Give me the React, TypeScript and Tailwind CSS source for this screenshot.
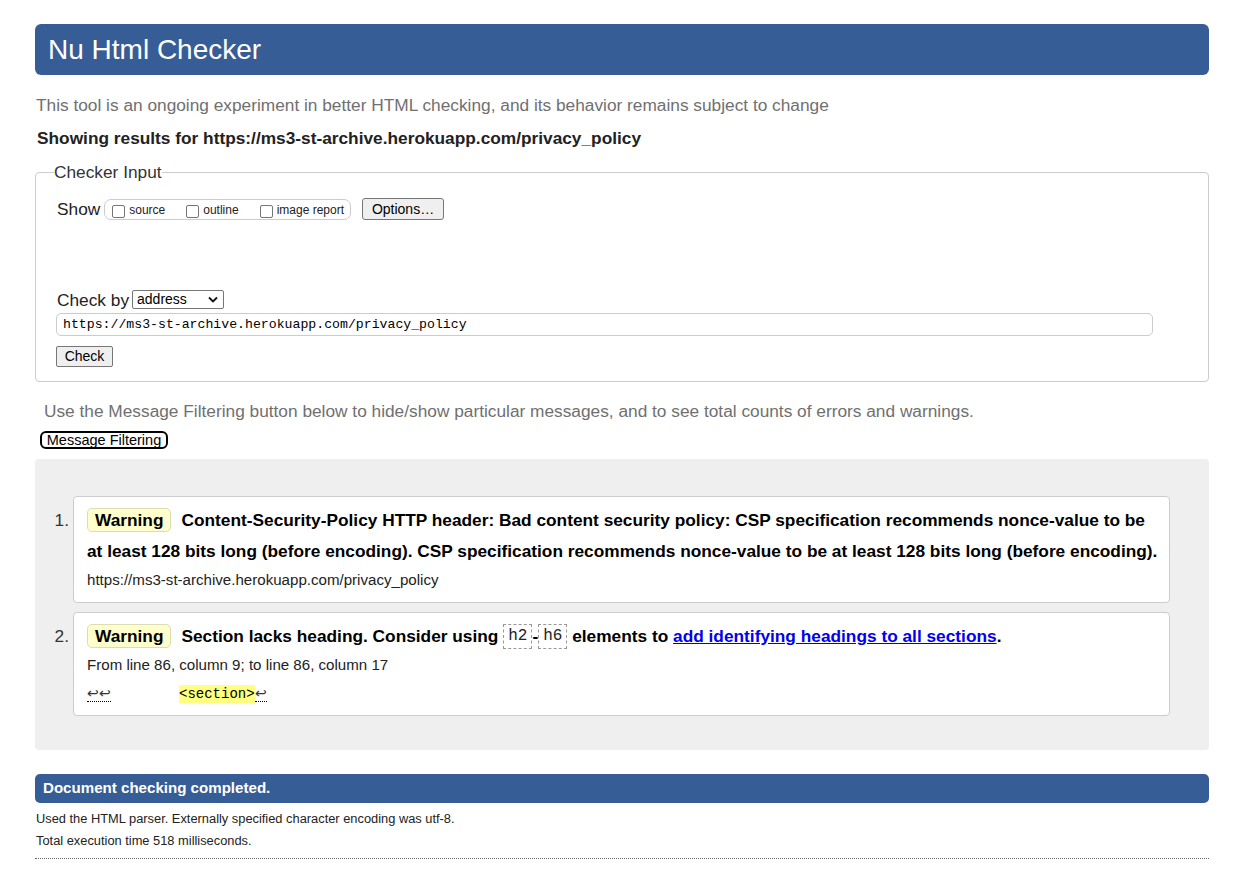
import React from "react";

const Checkbox = () => (
  <span className="inline-block w-[13px] h-[13px] border border-[#767676] rounded-[2px] bg-white shrink-0" />
);

const WarningBadge = () => (
  <span className="inline-block h-[24px] leading-[22px] px-[7px] mr-[10px] bg-[#ffffcc] border border-[#dcdcb4] rounded-[5px] align-middle">
    Warning
  </span>
);

const Code = ({ children }: { children: React.ReactNode }) => (
  <code className="inline-block h-[25px] leading-[23px] px-[4px] border border-dashed border-[#999] font-['Liberation_Mono',monospace] font-normal text-[16px] text-[#222] align-middle">
    {children}
  </code>
);

export default function App() {
  return (
    <div className="font-['Liberation_Sans',Arial,sans-serif] text-[#222] bg-white min-h-[871px] pl-[35px] pr-[24px] pt-[24px] pb-[14px]">
      {/* Title */}
      <h1 className="h-[51px] bg-[#365d95] rounded-[6px] text-white text-[28px] pl-[13px] flex items-center">
        Nu Html Checker
      </h1>

      <p className="mt-[20px] pl-[1px] text-[17.3px] leading-[20px] text-[#707070]">
        This tool is an ongoing experiment in better HTML checking, and its behavior remains subject to change
      </p>

      <p className="mt-[13px] pl-[2px] text-[17.3px] leading-[20px] font-bold">
        Showing results for https://ms3-st-archive.herokuapp.com/privacy_policy
      </p>

      {/* Checker input */}
      <fieldset className="mt-[14px] border border-[#cccccc] rounded-[4px] pl-[20px] pr-[20px] pb-[14px]">
        <legend className="-ml-[2px] px-0 text-[17.3px] leading-[20px] text-[#333]">
          Checker Input
        </legend>

        <div className="mt-[16px] flex items-center h-[22px]">
          <span className="ml-[1px] text-[17.3px] leading-[20px]">Show</span>
          <div className="ml-[4px] h-[21px] border border-[#cccccc] rounded-[7px] pl-[7px] pr-[6px] flex items-start">
            <div className="flex items-start">
              <span className="mt-[1px]">
                <Checkbox />
              </span>
              <span className="ml-[4px] mt-[3px] text-[12px] leading-[14px]">source</span>
            </div>
            <div className="ml-[21px] flex items-start">
              <span className="mt-[1px]">
                <Checkbox />
              </span>
              <span className="ml-[4px] mt-[3px] text-[12px] leading-[14px]">outline</span>
            </div>
            <div className="ml-[21px] flex items-start">
              <span className="mt-[1px]">
                <Checkbox />
              </span>
              <span className="ml-[4px] mt-[3px] text-[12px] leading-[14px]">image report</span>
            </div>
          </div>
          <button className="ml-[11px] w-[82px] h-[22px] bg-[#efefef] border border-[#767676] rounded-[3px] text-[14px] leading-[20px] text-black">
            Options…
          </button>
        </div>

        <div className="mt-[70px] flex items-center h-[19px]">
          <span className="ml-[1px] text-[17.3px] leading-[20px]">Check by</span>
          <div className="ml-[3px] w-[92px] h-[19px] border border-[#767676] rounded-[2px] bg-white flex items-center justify-between pl-[4px] pr-[5px]">
            <span className="text-[14px] leading-[17px] text-black">address</span>
            <svg width="10" height="7" viewBox="0 0 10 7" fill="none">
              <path d="M1 1.5 L5 5.5 L9 1.5" stroke="#111" strokeWidth="1.8" />
            </svg>
          </div>
        </div>

        <div className="mt-[4px] w-[1097px] h-[23px] border border-[#cccccc] rounded-[5px] pl-[6px] flex items-center">
          <span className="font-['Liberation_Mono',monospace] text-[13.2px] leading-[16px] text-black">
            https://ms3-st-archive.herokuapp.com/privacy_policy
          </span>
        </div>

        <button className="mt-[10px] block w-[57px] h-[21px] bg-[#efefef] border border-[#767676] rounded-[2px] text-[14px] leading-[19px] text-black">
          Check
        </button>
      </fieldset>

      <p className="mt-[19px] pl-[9px] text-[17.3px] leading-[20px] text-[#707070]">
        Use the Message Filtering button below to hide/show particular messages, and to see total counts of errors and warnings.
      </p>

      <button className="mt-[10px] ml-[5px] block w-[128px] h-[18px] border-2 border-black rounded-[6px] bg-white text-[14.5px] leading-[14px] text-black">
        Message Filtering
      </button>

      {/* Results */}
      <div className="mt-[10px] h-[291px] bg-[#efefef] rounded-[4px] pt-[37px] pr-[39px]">
        <ol className="flex flex-col gap-[9px]">
          <li className="flex">
            <span className="w-[38px] pr-[4px] text-right text-[17.3px] pt-[14px] leading-[20px] text-[#333]">1.</span>
            <div className="flex-1 bg-white border border-[#cccccc] rounded-[4px] pl-[13px] pr-[8px] pt-[7px] pb-[13px]">
              <p className="font-bold text-[17.3px] leading-[31px] text-black whitespace-nowrap">
                <WarningBadge />
                <span className="align-middle">
                  Content-Security-Policy HTTP header: Bad content security policy: CSP specification recommends nonce-value to be
                </span>
                <br />
                at least 128 bits long (before encoding). CSP specification recommends nonce-value to be at least 128 bits long (before encoding).
              </p>
              <p className="mt-[4px] text-[15.1px] leading-[18px]">
                https://ms3-st-archive.herokuapp.com/privacy_policy
              </p>
            </div>
          </li>

          <li className="flex">
            <span className="w-[38px] pr-[4px] text-right text-[17.3px] pt-[14px] leading-[20px] text-[#333]">2.</span>
            <div className="flex-1 bg-white border border-[#cccccc] rounded-[4px] pl-[13px] pr-[8px] pt-[7px] pb-[12px]">
              <p className="font-bold text-[17.3px] leading-[31px] text-black whitespace-nowrap">
                <WarningBadge />
                <span className="align-middle">Section lacks heading. Consider using </span>
                <Code>h2</Code>
                <span className="align-middle">-</span>
                <Code>h6</Code>
                <span className="align-middle">
                  {" "}elements to{" "}
                  <a href="#" className="text-[#0000ee] underline">
                    add identifying headings to all sections
                  </a>
                  .
                </span>
              </p>
              <p className="mt-[4px] text-[15.1px] leading-[18px]">
                From line 86, column 9; to line 86, column 17
              </p>
              <p className="mt-[11px] flex items-center h-[18px] text-[14px]">
                <span className="border-b border-dotted border-black leading-[15px] text-[#333]">↩↩</span>
                <span className="ml-[68px] bg-[#ffff80] font-['Liberation_Mono',monospace] text-[14px] leading-[18px] text-black">
                  &lt;section&gt;
                </span>
                <span className="border-b border-dotted border-black leading-[15px] text-[#333]">↩</span>
              </p>
            </div>
          </li>
        </ol>
      </div>

      {/* Footer */}
      <div className="mt-[24px] h-[29px] bg-[#365d95] rounded-[5px] pl-[8px] flex items-center">
        <span className="text-white font-bold text-[15.1px]">Document checking completed.</span>
      </div>
      <p className="mt-[5px] pl-[1px] text-[12.85px] leading-[22px]">
        Used the HTML parser. Externally specified character encoding was utf-8.
      </p>
      <p className="pl-[1px] text-[12.85px] leading-[22px]">Total execution time 518 milliseconds.</p>
      <div className="mt-[6px] border-b border-dotted border-[#666]" />
    </div>
  );
}
